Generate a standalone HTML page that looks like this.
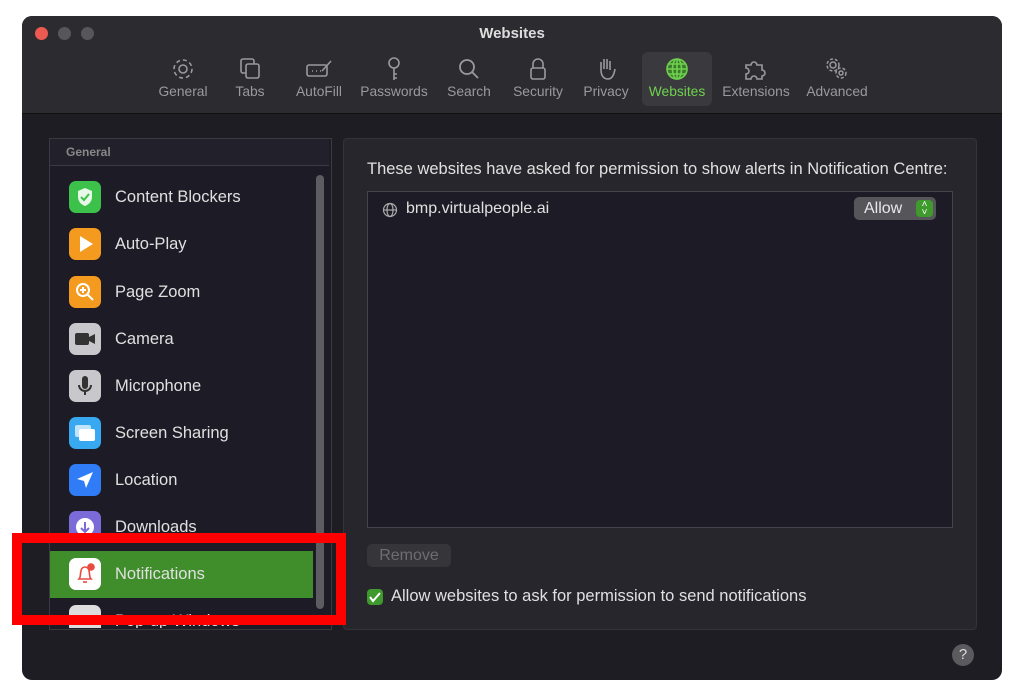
<!DOCTYPE html>
<html><head><meta charset="utf-8"><style>
body{margin:0;width:1024px;height:690px;background:#fff;position:relative;overflow:hidden;font-family:"Liberation Sans",sans-serif;}
.win{position:absolute;left:22px;top:16px;width:980px;height:664px;background:#1d1d23;border-radius:10px;overflow:hidden;}
.tb{position:absolute;left:0;top:0;width:980px;height:97px;background:#2c2c30;border-bottom:1px solid #111;}
.dot{position:absolute;top:11px;width:13px;height:13px;border-radius:50%;}
.title{position:absolute;top:9px;left:0;width:980px;text-align:center;color:#ddd;font-weight:bold;font-size:15px;}
.tab{position:absolute;top:36px;height:54px;text-align:center;color:#9a9a9e;font-size:13.8px;white-space:nowrap;}
.tab svg{display:block;margin:4px auto 2px;}
.sel{background:#3a3a3e;border-radius:6px;color:#6fd14f;}
.side{position:absolute;left:27px;top:122px;width:281px;height:490px;background:#1c1b26;border:1px solid #3a3a40;}
.gh{height:26px;border-bottom:1px solid #3a3a40;color:#888;font-size:12px;font-weight:bold;line-height:26px;padding-left:16px;width:263px;background:#22212b;}
.item{position:absolute;left:0;width:263px;height:47px;color:#e0e0e0;font-size:16.5px;}
.ic{position:absolute;left:19px;top:7px;width:32px;height:32px;border-radius:7px;}
.item span{position:absolute;left:65px;top:14px;}
.sb{position:absolute;left:266px;top:36px;width:8px;height:434px;background:#5c5c62;border-radius:4px;}
.panel{position:absolute;left:321px;top:122px;width:632px;height:490px;background:#26262c;border:1px solid #333338;border-radius:4px;}
</style></head><body>
<div class="win">
 <div class="tb">
  <div class="dot" style="left:13px;background:#ed5a51"></div>
  <div class="dot" style="left:36px;background:#57575b"></div>
  <div class="dot" style="left:59px;background:#57575b"></div>
  <div class="title">Websites</div>
  <div class="tab" style="left:132px;width:58px">
   <svg width="26" height="26" viewBox="0 0 26 26" fill="none" stroke="#9a9a9e" stroke-width="1.6"><circle cx="13" cy="13" r="4"/><circle cx="13" cy="13" r="9" stroke-dasharray="4 3"/></svg>General</div>
  <div class="tab" style="left:208px;width:40px">
   <svg width="26" height="26" viewBox="0 0 26 26" fill="none" stroke="#9a9a9e" stroke-width="1.6"><rect x="4" y="3" width="13" height="14" rx="2"/><rect x="9" y="8" width="13" height="14" rx="2" fill="#2c2c30"/></svg>Tabs</div>
  <div class="tab" style="left:270px;width:54px">
   <svg width="30" height="26" viewBox="0 0 30 26" fill="none" stroke="#9a9a9e" stroke-width="1.6"><rect x="3" y="9" width="20" height="11" rx="2"/><path d="M18 15L27 5"/><path d="M8 15h1M12 15h1M16 15h1"/></svg>AutoFill</div>
  <div class="tab" style="left:336px;width:72px">
   <svg width="26" height="26" viewBox="0 0 26 26" fill="none" stroke="#9a9a9e" stroke-width="1.6"><circle cx="13" cy="7" r="5"/><path d="M13 12v12M13 18h3M13 22h3"/></svg>Passwords</div>
  <div class="tab" style="left:422px;width:50px">
   <svg width="26" height="26" viewBox="0 0 26 26" fill="none" stroke="#9a9a9e" stroke-width="1.8"><circle cx="11" cy="11" r="7"/><path d="M16 16l6 6"/></svg>Search</div>
  <div class="tab" style="left:487px;width:58px">
   <svg width="26" height="26" viewBox="0 0 26 26" fill="none" stroke="#9a9a9e" stroke-width="1.6"><path d="M8 12V8a5 5 0 0110 0v4"/><rect x="6" y="12" width="14" height="11" rx="2"/></svg>Security</div>
  <div class="tab" style="left:558px;width:52px">
   <svg width="26" height="26" viewBox="0 0 26 26" fill="none" stroke="#9a9a9e" stroke-width="1.6"><path d="M8 14V6M11 13V3M14 13V3M17 14V5M8 14c0 6 3 9 7 9s6-4 7-10"/></svg>Privacy</div>
  <div class="tab sel" style="left:620px;width:70px">
   <svg width="26" height="26" viewBox="0 0 26 26" fill="none" stroke="#6fd14f" stroke-width="1.6"><circle cx="13" cy="13" r="10" fill="#3d7a2c"/><ellipse cx="13" cy="13" rx="4.5" ry="10"/><path d="M3 13h20M5 8h16M5 18h16M13 3v20"/></svg>Websites</div>
  <div class="tab" style="left:698px;width:72px">
   <svg width="30" height="26" viewBox="0 0 30 26" fill="none" stroke="#9a9a9e" stroke-width="1.6"><path d="M5 9h5a3 3 0 116 0h5v5a3 3 0 110 6v3H16a3 3 0 10-6 0H5v-5a3 3 0 100-6z"/></svg>Extensions</div>
  <div class="tab" style="left:782px;width:66px">
   <svg width="30" height="26" viewBox="0 0 30 26" fill="none" stroke="#9a9a9e" stroke-width="1.5"><circle cx="11" cy="9" r="3"/><circle cx="11" cy="9" r="6" stroke-dasharray="3 2"/><circle cx="19" cy="17" r="2"/><circle cx="19" cy="17" r="5" stroke-dasharray="3 2"/></svg>Advanced</div>
 </div>
 <div class="side">
  <div class="gh">General</div>
  <div class="sb"></div>
  <div class="item" style="top:35px"><div class="ic" style="background:#3cc24a"><svg width="32" height="32"><path d="M16 7l7 3v6c0 5-4 8-7 9-3-1-7-4-7-9v-6z" fill="#e8f8e8"/><path d="M12 16l3 3 5-6" stroke="#3cc24a" stroke-width="2" fill="none"/></svg></div><span>Content Blockers</span></div>
  <div class="item" style="top:82px"><div class="ic" style="background:#f39a1f"><svg width="32" height="32"><path d="M11 8l13 8-13 8z" fill="#fff"/></svg></div><span>Auto-Play</span></div>
  <div class="item" style="top:130px"><div class="ic" style="background:#f39a1f"><svg width="32" height="32" fill="none" stroke="#fff" stroke-width="2"><circle cx="14" cy="14" r="6"/><path d="M18 18l6 6M14 11v6M11 14h6"/></svg></div><span>Page Zoom</span></div>
  <div class="item" style="top:177px"><div class="ic" style="background:#c8c8cc"><svg width="32" height="32"><rect x="6" y="10" width="14" height="12" rx="2" fill="#333"/><path d="M20 14l6-3v10l-6-3z" fill="#333"/></svg></div><span>Camera</span></div>
  <div class="item" style="top:224px"><div class="ic" style="background:#c8c8cc"><svg width="32" height="32"><rect x="13" y="6" width="6" height="13" rx="3" fill="#333"/><path d="M10 15a6 6 0 0012 0M16 21v4" stroke="#333" stroke-width="2" fill="none"/></svg></div><span>Microphone</span></div>
  <div class="item" style="top:271px"><div class="ic" style="background:#38a8f0"><svg width="32" height="32"><rect x="6" y="8" width="16" height="12" rx="2" fill="#bfe4fb"/><rect x="10" y="12" width="16" height="12" rx="2" fill="#fff"/></svg></div><span>Screen Sharing</span></div>
  <div class="item" style="top:318px"><div class="ic" style="background:#2f7cf6"><svg width="32" height="32"><path d="M24 8L8 15l7 2 2 7z" fill="#fff"/></svg></div><span>Location</span></div>
  <div class="item" style="top:365px"><div class="ic" style="background:#7b6bd8"><svg width="32" height="32"><circle cx="16" cy="16" r="9" fill="#fff"/><path d="M16 11v9M12 17l4 4 4-4" stroke="#7b6bd8" stroke-width="2" fill="none"/></svg></div><span>Downloads</span></div>
  <div class="item" style="top:412px;background:#3f8e2b;width:263px"><div class="ic" style="background:#fff"><svg width="32" height="32" fill="none" stroke="#e84a3f" stroke-width="1.6"><path d="M10 21c2-2 1-5 2-8a4 4 0 018 0c1 3 0 6 2 8z"/><path d="M14 24h4"/><circle cx="22" cy="9" r="3" fill="#e84a3f"/></svg></div><span>Notifications</span></div>
  <div class="item" style="top:459px;height:30px;overflow:hidden"><div class="ic" style="background:#ddd"></div><span>Pop-up Windows</span></div>
 </div>
 <div class="panel">
  <div style="position:absolute;left:23px;top:21px;color:#e0e0e0;font-size:16.5px;white-space:nowrap">These websites have asked for permission to show alerts in Notification Centre:</div>
  <div style="position:absolute;left:23px;top:52px;width:584px;height:335px;background:#1d1c26;border:1px solid #44444a">
   <svg style="position:absolute;left:14px;top:10px" width="16" height="16" fill="none" stroke="#aaa" stroke-width="1.2"><circle cx="8" cy="8" r="6.5"/><ellipse cx="8" cy="8" rx="3" ry="6.5"/><path d="M1.5 8h13"/></svg>
   <div style="position:absolute;left:38px;top:8px;color:#e0e0e0;font-size:16px">bmp.virtualpeople.ai</div>
   <div style="position:absolute;left:486px;top:5px;width:82px;height:23px;background:#55555a;border-radius:5px;color:#e8e8e8;font-size:16px;line-height:23px;padding-left:10px;box-sizing:border-box">Allow
    <div style="position:absolute;right:3px;top:3px;width:17px;height:17px;background:#3f9a2d;border-radius:4px;color:#fff;font-size:10px;line-height:8px;text-align:center;padding-top:1px;box-sizing:border-box">˄<br>˅</div></div>
  </div>
  <div style="position:absolute;left:23px;top:405px;width:84px;height:23px;background:#35353a;border-radius:5px;color:#6d6d72;font-size:16px;line-height:23px;text-align:center">Remove</div>
  <div style="position:absolute;left:23px;top:450px;width:16px;height:16px;background:#3f9a2d;border-radius:4px"><svg width="16" height="16"><path d="M3 8l3 4 7-8" stroke="#fff" stroke-width="2" fill="none"/></svg></div>
  <div style="position:absolute;left:47px;top:448px;color:#e0e0e0;font-size:16.5px;white-space:nowrap">Allow websites to ask for permission to send notifications</div>
 </div>
 <div style="position:absolute;left:930px;top:628px;width:22px;height:22px;border-radius:50%;background:#5a5a5f;color:#ddd;font-size:15px;text-align:center;line-height:22px">?</div>
</div>
<div style="position:absolute;left:12px;top:533px;width:314px;height:72px;border:10px solid #f00"></div>
</body></html>
